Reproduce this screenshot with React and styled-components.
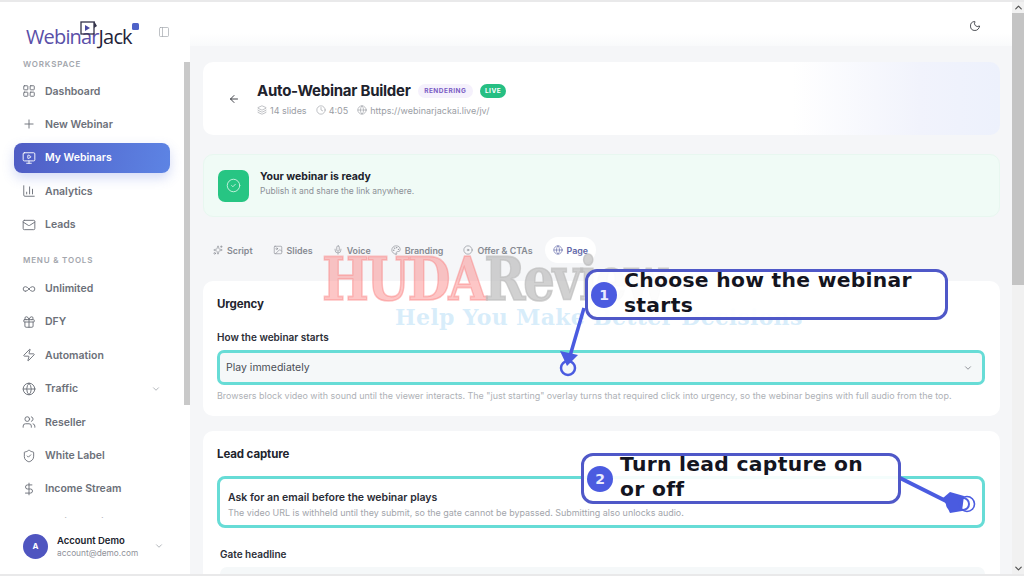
import React from "react";
import styled, { createGlobalStyle } from "styled-components";
import {
  LayoutGrid, Plus, MonitorPlay, ChartColumn, Mail, Infinity as InfinityIcon, Gift, Zap, Globe,
  ChevronDown, ChevronUp, Users, ShieldCheck, DollarSign, PanelLeft, Moon, ArrowLeft, Layers, Clock,
  CircleCheck, Sparkles, Image, Mic, Palette, Disc, Video,
} from "lucide-react";

const GlobalStyle = createGlobalStyle`
  html, body { margin: 0; padding: 0; height: 100%; overflow: hidden; }
  body { font-family: Inter, "Noto Sans", sans-serif; background: #f5f6f8; }
  * { box-sizing: border-box; }
`;

const Page = styled.div`
  position: relative;
  width: 1024px;
  height: 576px;
  overflow: hidden;
  display: flex;
  padding: 2px 0;
  background: #e9e9ea;
`;

const Sidebar = styled.aside`
  position: relative;
  width: 190px;
  flex: none;
  background: #fff;
  display: flex;
  flex-direction: column;
  overflow: hidden;
`;

const LogoRow = styled.div`
  height: 52px;
  flex: none;
  display: flex;
  align-items: flex-end;
  padding: 0 20px 5px 26px;
  position: relative;
`;

const LogoText = styled.div`
  font-family: "Open Sans", sans-serif;
  font-size: 20px;
  letter-spacing: -0.85px;
  line-height: 24px;
  color: #5a4fa8;
  span { color: #23233a; }
`;

const LogoMark = styled.svg`
  position: absolute;
  left: 80px;
  top: 17px;
`;

const Collapse = styled.div`
  position: absolute;
  left: 158px;
  top: 24px;
  color: #a4a7ad;
  display: flex;
`;

const SideNav = styled.nav`
  flex: 1;
  min-height: 0;
  overflow: hidden;
  padding: 0 20px 0 14px;
`;

const NavLabel = styled.div`
  font-size: 8px;
  font-weight: 600;
  letter-spacing: 0.8px;
  color: #a3a6ad;
  height: 10px;
  line-height: 10px;
  margin: ${(p) => (p.$second ? "15px 0 9px 9px" : "5px 0 7px 9px")};
`;

const NavItem = styled.div`
  height: 30px;
  margin-bottom: 3.4px;
  border-radius: 8px;
  display: flex;
  align-items: center;
  gap: 9px;
  padding: 0 9px 0 8px;
  font-size: 10.5px;
  font-weight: 600;
  color: ${(p) => (p.$active ? "#fff" : "#6c7079")};
  background: ${(p) => (p.$active ? "linear-gradient(100deg, #4f5cc4, #5d84e4)" : "transparent")};
  box-shadow: ${(p) => (p.$active ? "0 5px 12px rgba(85,110,220,.25)" : "none")};
  svg { flex: none; }
  em { margin-left: auto; display: flex; font-style: normal; color: #a5a8ae; }
`;

const AccountBar = styled.div`
  height: 56px;
  flex: none;
  display: flex;
  align-items: center;
  gap: 9px;
  padding: 0 20px 0 23px;
  background: #fff;
  border-right: 6px solid #fff;
`;

const Avatar = styled.div`
  width: 25px;
  height: 25px;
  border-radius: 50%;
  background: #4f55c0;
  color: #fff;
  font-size: 8px;
  font-weight: 700;
  display: flex;
  align-items: center;
  justify-content: center;
  flex: none;
`;

const AccountText = styled.div`
  flex: 1;
  b { display: block; font-size: 9.5px; font-weight: 600; color: #20222c; line-height: 13px; }
  small { display: block; font-size: 8.3px; color: #8f929a; line-height: 12px; }
`;

const SideThumb = styled.div`
  position: absolute;
  right: 0;
  top: 60px;
  width: 6px;
  height: 343px;
  background: #c9c9c9;
`;

const Main = styled.main`
  flex: 1;
  min-width: 0;
  display: flex;
  flex-direction: column;
  background: #f5f6f8;
  overflow: hidden;
`;

const TopBar = styled.header`
  height: 44px;
  flex: none;
  background: linear-gradient(#fff 70%, #f9fafb);
  display: flex;
  align-items: center;
  justify-content: flex-end;
  padding: 3px 31px 0 0;
  color: #33353c;
`;

const Content = styled.div`
  padding: 16px 12px 0 13px;
  display: flex;
  flex-direction: column;
`;

const HeaderCard = styled.section`
  height: 73px;
  border-radius: 10px;
  background: linear-gradient(90deg, #fff 0%, #fff 74%, #f1f3fc 90%, #edf1fc 100%);
  display: flex;
  align-items: center;
  gap: 17px;
  padding: 0 0 0 25px;
  color: #2a2c34;
`;

const TitleRow = styled.div`
  display: flex;
  align-items: center;
  gap: 7px;
  h1 { margin: 0; font-size: 15px; line-height: 18px; font-weight: 700; color: #20222c; letter-spacing: -0.25px; }
`;

const Tag = styled.span`
  font-size: 6.5px;
  font-weight: 700;
  letter-spacing: 0.5px;
  padding: 0 ${(p) => (p.$live ? "5px" : "6.5px")};
  height: 14px;
  line-height: 14px;
  border-radius: 7px;
  color: ${(p) => (p.$live ? "#fff" : "#7b5cc4")};
  background: ${(p) => (p.$live ? "#26bf83" : "#f5f1fc")};
`;

const Meta = styled.div`
  margin-top: 5px;
  display: flex;
  gap: 9px;
  font-size: 9px;
  color: #9a9da4;
  span { display: flex; align-items: center; gap: 3px; }
`;

const ReadyBanner = styled.section`
  margin-top: 19px;
  height: 63px;
  border-radius: 10px;
  background: #f0fbf6;
  border: 1px solid #e8f7f0;
  display: flex;
  align-items: center;
  gap: 11px;
  padding: 0 14px;
  b { display: block; font-size: 10.5px; font-weight: 700; color: #20222c; line-height: 14px; margin-top: -2px; }
  small { display: block; font-size: 8.5px; color: #8c9096; line-height: 15px; }
`;

const ReadyIcon = styled.div`
  width: 31px;
  height: 32px;
  border-radius: 7px;
  background: #27c583;
  color: #c9f2df;
  display: flex;
  align-items: center;
  justify-content: center;
`;

const Tabs = styled.div`
  margin-top: 20px;
  height: 26px;
  display: flex;
  align-items: center;
`;

const Tab = styled.div`
  height: 26px;
  border-radius: 13px;
  padding: 0 ${(p) => (p.$active ? "8px" : "10px")};
  margin-left: ${(p) => (p.$active ? "2px" : "0")};
  display: flex;
  align-items: center;
  gap: 4px;
  font-size: 8.9px;
  font-weight: 600;
  color: ${(p) => (p.$active ? "#6067a8" : "#868a92")};
  background: ${(p) => (p.$active ? "#fff" : "transparent")};
`;

const Card = styled.section`
  margin-top: ${(p) => p.$gap}px;
  background: #fff;
  border-radius: 10px;
  padding: 14px 15px 0 14px;
  height: ${(p) => p.$h}px;
  flex: none;
  h2 { margin: 0; font-size: 11.5px; line-height: 18px; font-weight: 700; color: #22242d; letter-spacing: -0.1px; }
`;

const FieldLabel = styled.div`
  font-size: 10px;
  font-weight: 600;
  line-height: 14px;
  color: #2c2e37;
  margin: ${(p) => p.$m};
`;

const SelectBox = styled.div`
  height: 35px;
  border: 3px solid #67dcd6;
  border-radius: 7px;
  background: #f5f8f9;
  display: flex;
  align-items: center;
  justify-content: space-between;
  padding: 0 9px 0 6px;
  font-size: 10.5px;
  color: #4a4d56;
  svg { color: #7d8087; }
`;

const Hint = styled.div`
  margin-top: 4px;
  font-size: 8.95px;
  line-height: 14px;
  white-space: nowrap;
  color: #aeb1b6;
`;

const ToggleRow = styled.div`
  margin-top: 13px;
  height: 52px;
  border: 3px solid #67dcd6;
  border-radius: 8px;
  display: flex;
  align-items: center;
  justify-content: space-between;
  padding: 5px 12px 0 8px;
  b { display: block; font-size: 10.5px; font-weight: 600; color: #2a2c35; line-height: 15px; }
  small { display: block; font-size: 8.95px; color: #a2a5ab; line-height: 15px; white-space: nowrap; }
`;

const Toggle = styled.div`
  width: 24px;
  height: 14px;
  border-radius: 7px;
  background: #5160e0;
  position: relative;
  margin-top: -1px;
  &::after {
    content: "";
    position: absolute;
    right: 2px;
    top: 2px;
    width: 10px;
    height: 10px;
    border-radius: 50%;
    background: #fff;
  }
`;

const GateLabel = styled(FieldLabel)`
  font-size: 10px;
`;

const GateInput = styled.div`
  height: 30px;
  margin: 6px 0 0 3px;
  border-radius: 7px;
  background: #f5f8f9;
`;

const PageScroll = styled.div`
  width: 12px;
  flex: none;
  background: #f1f1f1;
  display: flex;
  flex-direction: column;
  align-items: center;
  color: #505050;
`;

const ScrollThumb = styled.div`
  width: 12px;
  height: 272px;
  background: #c4c4c4;
`;

const ScrollGap = styled.div`
  flex: 1;
`;

const Watermark = styled.div`
  position: absolute;
  left: 322px;
  top: 254px;
  font-family: "DejaVu Serif", serif;
  font-weight: 700;
  font-size: 54px;
  line-height: 50px;
  letter-spacing: -2.6px;
  -webkit-text-stroke: 1.5px currentColor;
  white-space: nowrap;
  color: rgba(190, 190, 190, 0.7);
  pointer-events: none;
  transform: scale(0.92, 1.12);
  transform-origin: left center;
  span { color: rgba(250, 120, 120, 0.42); }
`;

const WatermarkSub = styled.div`
  position: absolute;
  left: 395px;
  top: 304px;
  font-family: "DejaVu Serif", serif;
  font-weight: 700;
  font-size: 22px;
  line-height: 26px;
  letter-spacing: 0.3px;
  white-space: nowrap;
  color: rgba(190, 225, 248, 0.6);
  pointer-events: none;
`;

const Callout = styled.div`
  position: absolute;
  left: ${(p) => p.$x}px;
  top: ${(p) => p.$y}px;
  width: ${(p) => p.$w}px;
  height: 51px;
  border: 3px solid #4f58c8;
  border-radius: 12px;
  background: rgba(255, 255, 255, 0.93);
  display: flex;
  align-items: center;
  gap: 7px;
  padding-left: 3px;
`;

const CalloutNumber = styled.div`
  width: 26px;
  height: 26px;
  flex: none;
  border-radius: 50%;
  background: #4b5be0;
  color: #e8ebff;
  font-family: "DejaVu Sans", sans-serif;
  font-weight: 700;
  font-size: 14px;
  display: flex;
  align-items: center;
  justify-content: center;
`;

const CalloutText = styled.div`
  font-family: "DejaVu Sans", sans-serif;
  font-weight: 700;
  font-size: 20.3px;
  line-height: 25px;
  letter-spacing: 0.3px;
  color: #14151f;
  margin-top: -4px;
`;

const Arrows = styled.svg`
  position: absolute;
  left: 0;
  top: 0;
  pointer-events: none;
`;

const mainNav = [
  [LayoutGrid, "Dashboard"],
  [Plus, "New Webinar"],
  [MonitorPlay, "My Webinars", true],
  [ChartColumn, "Analytics"],
  [Mail, "Leads"],
];

const toolsNav = [
  [InfinityIcon, "Unlimited"],
  [Gift, "DFY"],
  [Zap, "Automation"],
  [Globe, "Traffic", false, true],
  [Users, "Reseller"],
  [ShieldCheck, "White Label"],
  [DollarSign, "Income Stream"],
  [Video, "Social Media"],
];

const tabs = [
  [Sparkles, "Script"],
  [Image, "Slides"],
  [Mic, "Voice"],
  [Palette, "Branding"],
  [Disc, "Offer & CTAs"],
  [Globe, "Page", true],
];

const renderNav = ([Icon, label, active, caret]) => (
  <NavItem key={label} $active={active}>
    <Icon size={14} strokeWidth={1.6} />
    {label}
    {caret && (
      <em>
        <ChevronDown size={10} />
      </em>
    )}
  </NavItem>
);

export default function App() {
  return (
    <>
      <GlobalStyle />
      <Page>
        <Sidebar>
          <LogoRow>
            <LogoText>
              Webinar<span>Jack</span>
            </LogoText>
            <LogoMark width="62" height="20" viewBox="0 0 62 20">
              <rect x="1" y="3" width="13" height="12" fill="none" stroke="#33334a" strokeWidth="1.3" />
              <path d="M5 6l5 3-5 3z" fill="#4a4aa0" />
              <path d="M14 2l3 5-3 2z" fill="#33334a" />
              <rect x="52" y="4" width="7" height="7" rx="1.5" fill="#4f62c8" />
            </LogoMark>
            <Collapse>
              <PanelLeft size={12} strokeWidth={1.4} />
            </Collapse>
          </LogoRow>
          <SideNav>
            <NavLabel>WORKSPACE</NavLabel>
            {mainNav.map(renderNav)}
            <NavLabel $second>MENU &amp; TOOLS</NavLabel>
            {toolsNav.map(renderNav)}
          </SideNav>
          <AccountBar>
            <Avatar>A</Avatar>
            <AccountText>
              <b>Account Demo</b>
              <small>account@demo.com</small>
            </AccountText>
            <ChevronDown size={10} color="#a5a8ae" />
          </AccountBar>
          <SideThumb />
        </Sidebar>
        <Main>
          <TopBar>
            <Moon size={12} strokeWidth={1.7} />
          </TopBar>
          <Content>
            <HeaderCard>
              <ArrowLeft size={12} strokeWidth={1.8} />
              <div>
                <TitleRow>
                  <h1>Auto-Webinar Builder</h1>
                  <Tag>RENDERING</Tag>
                  <Tag $live>LIVE</Tag>
                </TitleRow>
                <Meta>
                  <span>
                    <Layers size={10} strokeWidth={1.5} />
                    14 slides
                  </span>
                  <span>
                    <Clock size={10} strokeWidth={1.5} />
                    4:05
                  </span>
                  <span>
                    <Globe size={10} strokeWidth={1.5} />
                    https://webinarjackai.live/jv/
                  </span>
                </Meta>
              </div>
            </HeaderCard>
            <ReadyBanner>
              <ReadyIcon>
                <CircleCheck size={15} strokeWidth={1.5} />
              </ReadyIcon>
              <div>
                <b>Your webinar is ready</b>
                <small>Publish it and share the link anywhere.</small>
              </div>
            </ReadyBanner>
            <Tabs>
              {tabs.map(([Icon, label, active]) => (
                <Tab key={label} $active={active}>
                  <Icon size={10} strokeWidth={1.5} />
                  {label}
                </Tab>
              ))}
            </Tabs>
            <Card $gap={18} $h={135}>
              <h2>Urgency</h2>
              <FieldLabel $m="17px 0 6px">How the webinar starts</FieldLabel>
              <SelectBox>
                Play immediately
                <ChevronDown size={10} />
              </SelectBox>
              <Hint>
                Browsers block video with sound until the viewer interacts. The "just starting" overlay turns that
                required click into urgency, so the webinar begins with full audio from the top.
              </Hint>
            </Card>
            <Card $gap={15} $h={160}>
              <h2>Lead capture</h2>
              <ToggleRow>
                <div>
                  <b>Ask for an email before the webinar plays</b>
                  <small>
                    The video URL is withheld until they submit, so the gate cannot be bypassed. Submitting also unlocks
                    audio.
                  </small>
                </div>
                <Toggle />
              </ToggleRow>
              <GateLabel $m="19px 0 0 3px">Gate headline</GateLabel>
              <GateInput />
            </Card>
          </Content>
        </Main>
        <PageScroll>
          <ChevronUp size={11} strokeWidth={2.5} />
          <ScrollThumb />
          <ScrollGap />
          <ChevronDown size={11} strokeWidth={2.5} />
        </PageScroll>
        <Watermark>
          <span>HUDA</span>Review
        </Watermark>
        <WatermarkSub>Help You Make Better Decisions</WatermarkSub>
        <Arrows width="1024" height="576" viewBox="0 0 1024 576">
          <path d="M584 308L570 356" stroke="#4a5be0" strokeWidth="3.5" fill="none" />
          <path d="M560 351L578 355L567 366z" fill="#4a5be0" />
          <circle cx="568" cy="368" r="7" fill="none" stroke="#4a5be0" strokeWidth="2.5" />
          <path d="M900 478L948 502" stroke="#4a5be0" strokeWidth="4" fill="none" />
          <path d="M943 498L950 513L962 511L964 496L950 492z" fill="#4a5be0" />
          <circle cx="967" cy="504" r="7.5" fill="none" stroke="#4a5be0" strokeWidth="1.6" />
        </Arrows>
        <Callout $x={585} $y={269} $w={363}>
          <CalloutNumber>1</CalloutNumber>
          <CalloutText>
            Choose how the webinar
            <br />
            starts
          </CalloutText>
        </Callout>
        <Callout $x={581} $y={453} $w={320}>
          <CalloutNumber>2</CalloutNumber>
          <CalloutText>
            Turn lead capture on
            <br />
            or off
          </CalloutText>
        </Callout>
      </Page>
    </>
  );
}
